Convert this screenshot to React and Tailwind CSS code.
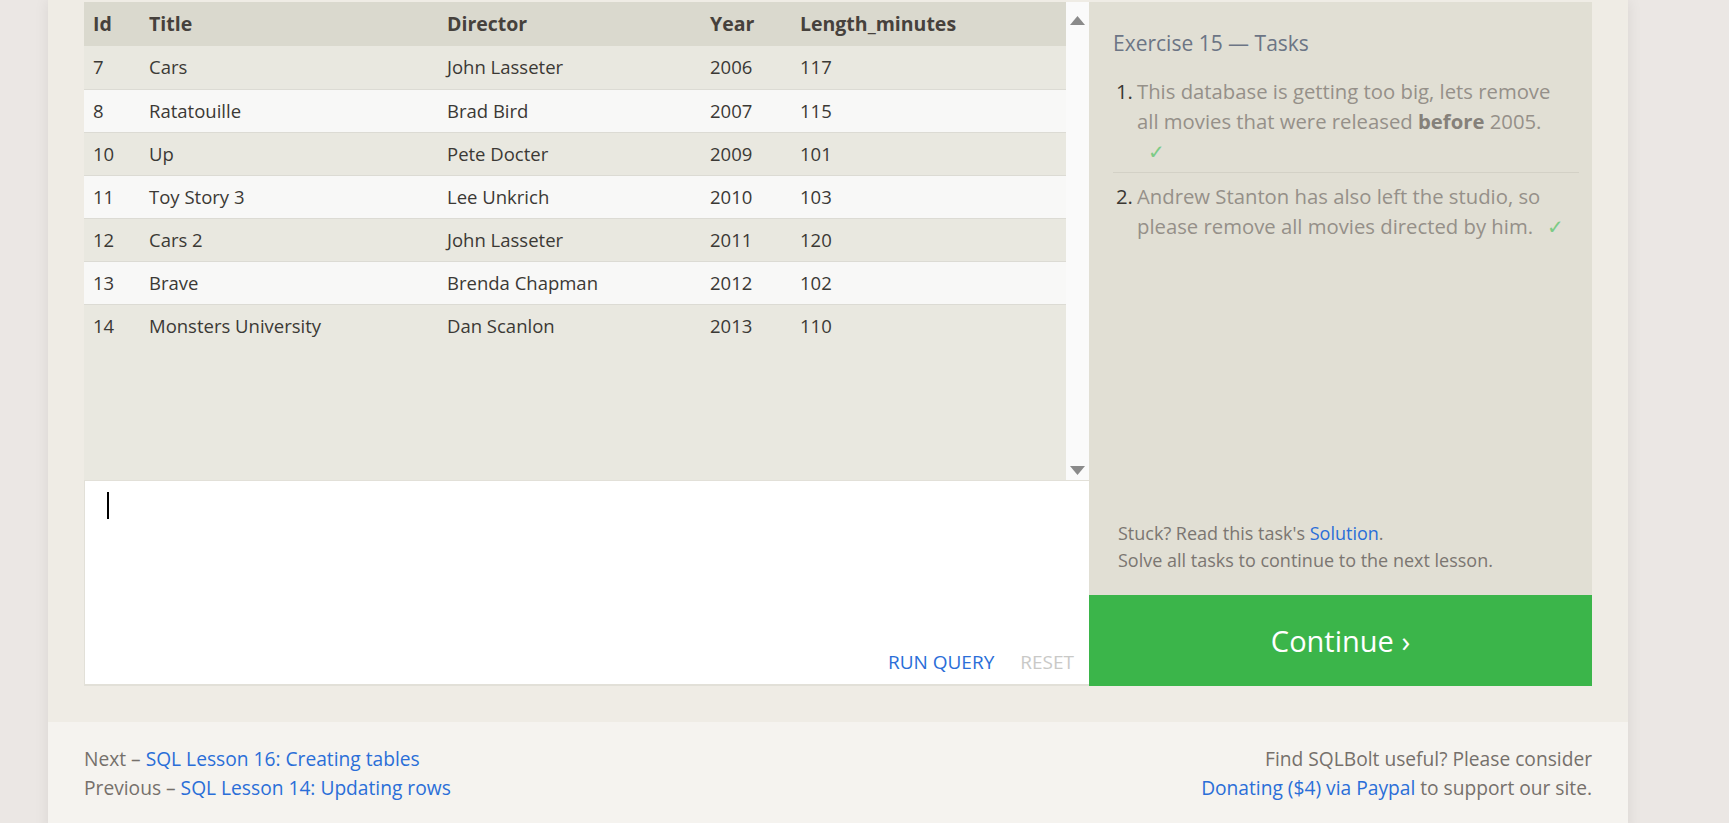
import React from "react";

const movies = [
  [7, "Cars", "John Lasseter", 2006, 117],
  [8, "Ratatouille", "Brad Bird", 2007, 115],
  [10, "Up", "Pete Docter", 2009, 101],
  [11, "Toy Story 3", "Lee Unkrich", 2010, 103],
  [12, "Cars 2", "John Lasseter", 2011, 120],
  [13, "Brave", "Brenda Chapman", 2012, 102],
  [14, "Monsters University", "Dan Scanlon", 2013, 110],
];

const Check = ({ className = "" }) => (
  <span className={"text-[#7ccb86] " + className}>✓</span>
);

const ResultsTable = () => {
  return (
    <div className="flex h-[478px] bg-[#e9e8e0]">
      <div className="flex-1">
        <table className="w-full table-fixed border-collapse text-left text-[18.5px] text-[#3b3935]">
          <thead>
            <tr className="h-[44px] bg-[#dad9ce] text-[19.5px] text-[#46413c]">
              <th className="w-[56px] pl-[9px] font-bold">Id</th>
              <th className="w-[298px] pl-[9px] font-bold">Title</th>
              <th className="w-[263px] pl-[9px] font-bold">Director</th>
              <th className="w-[90px] pl-[9px] font-bold">Year</th>
              <th className="pl-[9px] font-bold">Length_minutes</th>
            </tr>
          </thead>
          <tbody>
            {movies.map((m, i) => (
              <tr
                key={m[0]}
                className={
                  "h-[43px] " +
                  (i % 2 === 0 ? "bg-[#e9e8e0]" : "bg-[#f8f8f7]") +
                  (i < movies.length - 1 ? " border-b border-[#dcdbd4]" : "")
                }
              >
                {m.map((c, j) => (
                  <td key={j} className="pl-[9px]">
                    {c}
                  </td>
                ))}
              </tr>
            ))}
          </tbody>
        </table>
      </div>
      {/* fake scrollbar */}
      <div className="flex w-[23px] flex-col items-center justify-between bg-[#fafafa] pt-[14px] pb-[5px]">
        <svg width="15" height="9" viewBox="0 0 15 9">
          <polygon points="7.5,0 15,9 0,9" fill="#8a8a8a" />
        </svg>
        <svg width="15" height="9" viewBox="0 0 15 9">
          <polygon points="0,0 15,0 7.5,9" fill="#8a8a8a" />
        </svg>
      </div>
    </div>
  );
};

const Editor = () => (
  <div className="flex h-[206px] flex-col border-t border-l border-[#e2e0d8] border-b-2 bg-white">
    <div className="flex-1 pl-[22px] pt-[11px]">
      <div className="h-[27px] w-[2px] bg-black" />
    </div>
    <div className="flex justify-end gap-[26px] pr-[15px] pb-[7px] text-[19px] leading-[30px]">
      <a href="#" className="text-[#2a6ed8]">
        RUN QUERY
      </a>
      <span className="text-[#c9c9c7]">RESET</span>
    </div>
  </div>
);

const Tasks = () => (
  <div className="flex flex-1 flex-col justify-between bg-[#e1dfd4] pt-[26px] pr-[13px] pl-[24px]">
    <div>
      <h2 className="text-[21px] leading-[30px] text-[#6c7585]">
        Exercise 15 — Tasks
      </h2>
      <ol className="mt-[18px] text-[20.3px] leading-[30px] text-[#959089]">
        <li className="flex border-b border-[#d3d1c6] pb-[6px]">
          <span className="w-[24px] shrink-0 pl-[3px] text-[#3a3733]">1.</span>
          <div>
            This database is getting too big, lets remove
            <br />
            all movies that were released{" "}
            <b className="text-[#85817a]">before</b> 2005.
            <br />
            <Check className="pl-[11px]" />
          </div>
        </li>
        <li className="flex pt-[8px]">
          <span className="w-[24px] shrink-0 pl-[3px] text-[#3a3733]">2.</span>
          <div>
            Andrew Stanton has also left the studio, so
            <br />
            please remove all movies directed by him.
            <Check className="ml-[14px]" />
          </div>
        </li>
      </ol>
    </div>
    <div className="pb-[21px] pl-[5px] text-[18px] leading-[27px] text-[#7b7671]">
      <p>
        Stuck? Read this task's{" "}
        <a href="#" className="text-[#2a6ed8]">
          Solution
        </a>
        .
      </p>
      <p>Solve all tasks to continue to the next lesson.</p>
    </div>
  </div>
);

export default function App() {
  return (
    <div className="min-h-screen bg-[#ebe7e4] font-['Open_Sans',sans-serif]">
      <div className="ml-[48px] w-[1580px] shadow-[0_0_14px_rgba(0,0,0,0.08)]">
        <div className="bg-[#efece5] px-[36px] pt-[2px] pb-[36px]">
          <div className="flex">
            <div className="flex w-[1005px] flex-col">
              <ResultsTable />
              <Editor />
            </div>
            <div className="flex flex-1 flex-col">
              <Tasks />
              <a
                href="#"
                className="flex h-[91px] items-center justify-center bg-[#3bb54a] text-[29px] text-white"
              >
                Continue ›
              </a>
            </div>
          </div>
        </div>
        <footer className="flex h-[110px] justify-between bg-[#f5f3ef] px-[36px] pt-[22px] text-[19.2px] leading-[29px] text-[#75706b]">
          <div>
            <p>
              Next –{" "}
              <a href="#" className="text-[#2a6ed8]">
                SQL Lesson 16: Creating tables
              </a>
            </p>
            <p>
              Previous –{" "}
              <a href="#" className="text-[#2a6ed8]">
                SQL Lesson 14: Updating rows
              </a>
            </p>
          </div>
          <div className="text-right">
            <p>Find SQLBolt useful? Please consider</p>
            <p>
              <a href="#" className="text-[#2a6ed8]">
                Donating ($4) via Paypal
              </a>{" "}
              to support our site.
            </p>
          </div>
        </footer>
      </div>
    </div>
  );
}
